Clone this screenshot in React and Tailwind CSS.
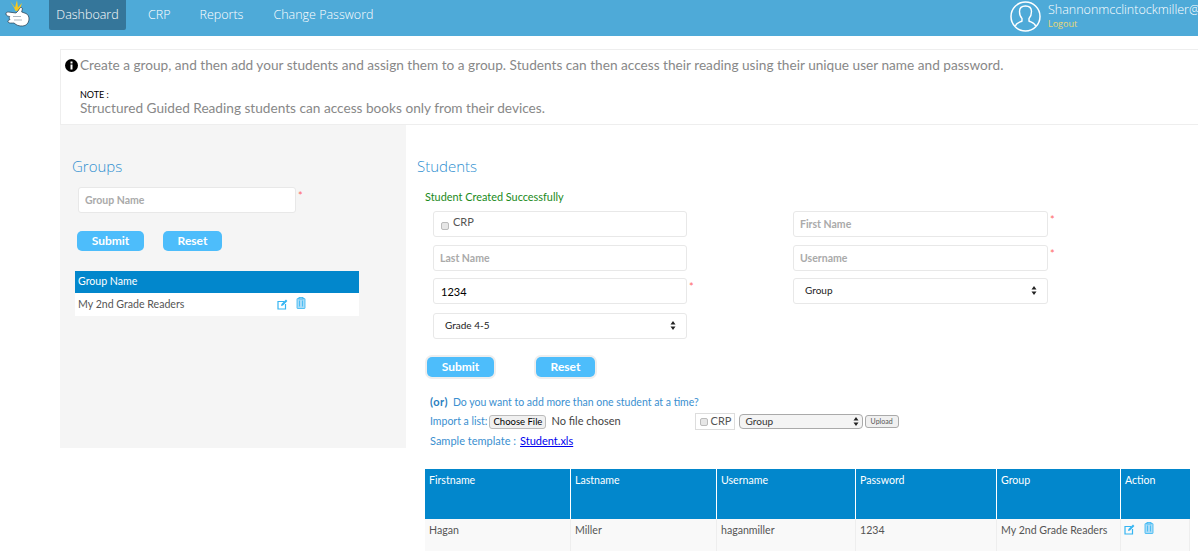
import React from 'react';

const fieldClass = 'block h-[26px] w-[254px] rounded-[3px] border border-[#e8e8e8] bg-white px-[6px] pb-[1px] text-[10.500px] font-bold text-black outline-none placeholder:text-[#aaa]';

const LogoHand = () => (
  <svg width="32" height="28" viewBox="0 0 32 28" className="shrink-0">
    <path d="M10 1l5 6.500L17 0l1 7.500L22 3l-2.500 7.500-4 .5-1.500-3.500z" fill="#f7c81e" />
    <path d="M6 13.500c0-1.500 2-1.500 4-1.300l6 .8 2-2c1-1.500 2-4 3.500-3.500 1.500.5.500 2.500.2 4.500l4.300 1.500c2 1 3 3 3 5.500s-1.500 5.500-4 6.500c-3 1-7 .5-9-1l-2-1.500c-2 0-5 .5-6-1-.5-1 .5-2 2-2.500-1-.8-1-2-.3-3-1.700-.3-3.700-.8-3.700-2.500z" fill="#fff" stroke="#22384a" strokeWidth="0.700" />
    <path d="M13 16.500h8M14 20h8" stroke="#8a9aa5" strokeWidth="0.700" fill="none" />
  </svg>
);

const UserCircle = () => (
  <svg width="31" height="31" viewBox="0 0 31 31" fill="none" stroke="#fff" className="shrink-0">
    <circle cx="15.500" cy="15.500" r="14.500" strokeWidth="1.500" />
    <path d="M5.500 25c.5-3 3.500-3.500 6.500-5v-2.500c-1.500-1.500-2.500-4-2.500-7 0-3.500 2.500-5.500 6-5.500s6 2 6 5.500c0 3-1 5.500-2.500 7V20c3 1.500 6 2 6.500 5" strokeWidth="1.400" />
  </svg>
);

const EditIcon = () => (
  <svg width="11" height="11" viewBox="0 0 11 11" fill="none">
    <path d="M7 2.500H1v7.500h7.500V5" stroke="#35b5f2" strokeWidth="1.200" />
    <path d="M4 7l.5-2L9 .6l1.400 1.400L6 6.500z" fill="#35b5f2" />
  </svg>
);

const TrashIcon = () => (
  <svg width="10" height="12" viewBox="0 0 10 12" fill="#a9dcf7" stroke="#35b5f2" strokeWidth="0.800">
    <rect x="1" y="1.500" width="8" height="10" rx="0.500" />
    <rect x="3" y="0.500" width="4" height="1.500" />
    <path d="M3.500 3.500v6M6.500 3.500v6" />
  </svg>
);

const Star = () => <span className="ml-[2px] self-start text-[11px] leading-[18px] text-[#f66]">*</span>;

const Arrows = () => (
  <svg width="6" height="9" viewBox="0 0 6 9" fill="#222">
    <path d="M3 0l2.500 3.500h-5zM3 9L.5 5.500h5z" />
  </svg>
);

const BlueButton = ({ label, className }) => (
  <button className={`h-[20px] rounded-[5px] bg-[#4dbdfb] text-[12px] font-bold text-white ${className}`}>{label}</button>
);

const FakeSelect = ({ label, width }) => (
  <div className={`flex h-[26px] items-center justify-between rounded-[3px] border border-[#e8e8e8] bg-white pr-[10px] pb-[2px] pl-[11px] text-[10px] text-[#222] ${width}`}>
    <span>{label}</span>
    <Arrows />
  </div>
);

const App = () => {
  const columns = [
    ['Firstname', 'w-[146px]', 'Hagan'],
    ['Lastname', 'w-[146px]', 'Miller'],
    ['Username', 'w-[139px]', 'haganmiller'],
    ['Password', 'w-[141px]', '1234'],
    ['Group', 'w-[124px]', 'My 2nd Grade Readers'],
  ];

  return (
    <div className="h-[551px] w-[1198px] overflow-hidden bg-white font-['Lato',sans-serif] text-[#555]">
      <header className="flex h-[36px] bg-[#4eaad8]">
        <div className="w-[49px]">
          <LogoHand />
        </div>
        <nav className="flex h-[30px] font-['Open_Sans',sans-serif] text-[12.500px] font-light text-white">
          <a className="flex w-[77px] items-center justify-center rounded-b-[2px] bg-[#35769a]">Dashboard</a>
          <a className="ml-[22px] flex items-center">CRP</a>
          <a className="ml-[29px] flex items-center">Reports</a>
          <a className="ml-[30px] flex items-center">Change Password</a>
        </nav>
        <div className="ml-auto flex w-[188px] shrink-0 overflow-hidden pt-[1px]">
          <UserCircle />
          <div className="ml-[7px] font-['Open_Sans',sans-serif]">
            <p className="text-[12.500px] leading-[18px] font-light whitespace-nowrap text-white">Shannonmcclintockmiller@</p>
            <p className="text-[9px] leading-[10px] text-[#ecd973]">Logout</p>
          </div>
        </div>
      </header>

      <div className="ml-[60px] pt-[13px]">
        <section className="h-[76px] border border-r-0 border-[#eeeeee] pt-[5px] pl-[4px] text-[13.650px] text-[#888]">
          <p className="flex items-center leading-[20px]">
            <svg width="13" height="13" viewBox="0 0 13 13" className="mr-[2px]">
              <circle cx="6.500" cy="6.500" r="6.500" fill="#000" />
              <rect x="5.500" y="5.500" width="2" height="5" fill="#fff" />
              <rect x="5.500" y="2.500" width="2" height="2" fill="#fff" />
            </svg>
            Create a group, and then add your students and assign them to a group. Students can then access their reading using their unique user name and password.
          </p>
          <p className="mt-[14px] ml-[15px] text-[9px] leading-[11px] text-black">NOTE :</p>
          <p className="ml-[15px] leading-[16px]">Structured Guided Reading students can access books only from their devices.</p>
        </section>

        <div className="flex items-start">
          <aside className="h-[323px] w-[346px] shrink-0 bg-[#f5f5f5] pt-[31px] pl-[12px]">
            <h2 className="font-['Open_Sans',sans-serif] text-[15px] leading-[20px] font-light text-[#2f8fd0]">Groups</h2>
            <div className="mt-[11px] ml-[6px] flex">
              <input className={`${fieldClass} !w-[218px]`} placeholder="Group Name" />
              <Star />
            </div>
            <div className="mt-[18px] ml-[5px] flex gap-[19px]">
              <BlueButton label="Submit" className="w-[67px]" />
              <BlueButton label="Reset" className="w-[59px]" />
            </div>
            <div className="mt-[20px] ml-[3px] w-[284px] text-[10.600px]">
              <div className="flex h-[22px] items-center bg-[#0287cc] pl-[3px] text-white">Group Name</div>
              <div className="flex h-[23px] items-center bg-white pl-[3px] text-[#555]">
                <span className="w-[199px]">My 2nd Grade Readers</span>
                <EditIcon />
                <span className="mt-[-3px] ml-[8px]"><TrashIcon /></span>
              </div>
            </div>
          </aside>

          <main className="min-w-0 flex-1 pt-[31px] pl-[11px]">
            <h2 className="font-['Open_Sans',sans-serif] text-[15px] leading-[20px] font-light text-[#2f8fd0]">Students</h2>
            <p className="mt-[14px] ml-[8px] text-[10.900px] leading-[14px] text-[#1a8a1a]">Student Created Successfully</p>

            <div className="mt-[7px] ml-[16px] grid w-[640px] grid-cols-[360px_280px] items-start">
              <div className="flex flex-col">
                <label className="flex h-[26px] w-[254px] items-center rounded-[3px] border border-[#e8e8e8] bg-white pl-[7px] text-[11px]">
                  <span className="mt-[3px] mr-[4px] h-[8px] w-[8px] rounded-[2px] border border-[#bbb] bg-[#e6e6e6]" />
                  <span className="mb-[3px]">CRP</span>
                </label>
                <input className={`${fieldClass} mt-[8px]`} placeholder="Last Name" />
                <div className="mt-[7px] flex">
                  <input className={`${fieldClass} !px-[7px] !pb-0 !text-[11px] !font-normal`} defaultValue="1234" />
                  <Star />
                </div>
                <div className="mt-[9px]">
                  <FakeSelect label="Grade 4-5" width="w-[254px]" />
                </div>
              </div>
              <div className="flex flex-col">
                <div className="flex">
                  <input className={`${fieldClass} !w-[255px]`} placeholder="First Name" />
                  <Star />
                </div>
                <div className="mt-[8px] flex">
                  <input className={`${fieldClass} !w-[255px]`} placeholder="Username" />
                  <Star />
                </div>
                <div className="mt-[7px]">
                  <FakeSelect label="Group" width="w-[255px]" />
                </div>
              </div>
            </div>

            <div className="mt-[18px] ml-[10px] flex gap-[42px]">
              <BlueButton label="Submit" className="w-[67px] ring-2 ring-[#eee]" />
              <BlueButton label="Reset" className="w-[59px] ring-2 ring-[#eee]" />
            </div>

            <div className="mt-[18px] ml-[13px] text-[10.500px] text-[#3a8fd0]">
              <p className="h-[17px] leading-[14px]"><b className="mr-[5px] text-[11px] tracking-[0.5px] text-[#2a80c0]">(or)</b>Do you want to add more than one student at a time?</p>
              <div className="flex h-[19px] items-center">
                <span>Import a list:</span>
                <button className="ml-[2px] h-[14px] w-[57px] rounded-[3px] border border-[#bbb] bg-[#f0f0f0] text-[9.500px] leading-[12px] text-black">Choose File</button>
                <span className="ml-[5px] text-[11px] text-[#444]">No file chosen</span>
                <span className="ml-[74px] flex h-[17px] w-[40px] items-center border border-[#ddd] pl-[4px] text-[11px] text-[#555]">
                  <span className="mr-[3px] h-[8px] w-[8px] rounded-[2px] border border-[#bbb] bg-[#e6e6e6]" />
                  CRP
                </span>
                <span className="ml-[4px] flex h-[15px] w-[124px] items-center justify-between rounded-[4px] border border-[#aaa] bg-[#f4f4f4] pr-[3px] pl-[6px] text-[10px] text-[#333]">
                  Group
                  <Arrows />
                </span>
                <button className="ml-[2px] h-[13px] w-[34px] rounded-[3px] border border-[#aaa] bg-[#f0f0f0] text-[7px] text-[#555]">Upload</button>
              </div>
              <p className="mt-[1px] text-[11px] leading-[17px]">Sample template :<a className="ml-[4px] text-[#0000ee] underline">Student.xls</a></p>
            </div>

            <div className="mt-[20px] ml-[8px] w-[765px] text-[10.600px]">
              <div className="flex h-[50px] bg-[#0287cc] text-white">
                {columns.map(([name, width]) => (
                  <div key={name} className={`${width} border-r border-white pt-[4px] pl-[4px]`}>{name}</div>
                ))}
                <div className="flex-1 pt-[4px] pl-[4px]">Action</div>
              </div>
              <div className="flex h-[40px] border-r border-[#eee] bg-[#f9f9f9] text-[#555]">
                {columns.map(([name, width, value]) => (
                  <div key={name} className={`${width} border-r border-[#eee] pt-[4px] pl-[4px]`}>{value}</div>
                ))}
                <div className="flex flex-1 items-start gap-[9px] pt-[3px] pl-[3px]">
                  <span className="mt-[2px]"><EditIcon /></span>
                  <TrashIcon />
                </div>
              </div>
            </div>
          </main>
        </div>
      </div>
    </div>
  );
};

export default App;
